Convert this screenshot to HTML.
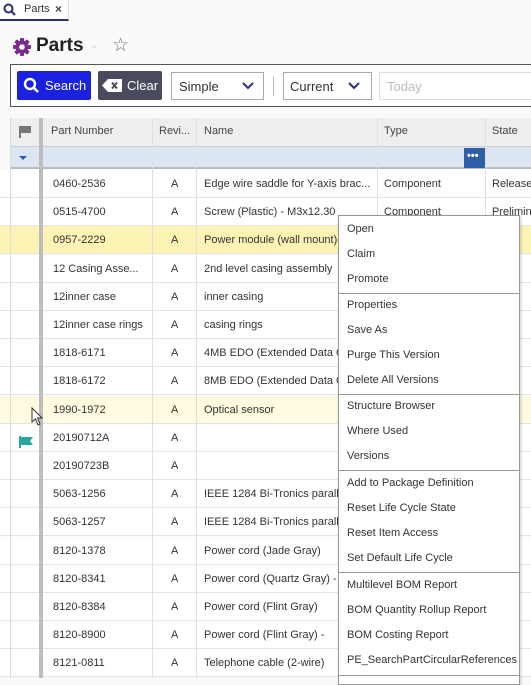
<!DOCTYPE html>
<html><head><style>
*{margin:0;padding:0;box-sizing:border-box}
body{width:531px;height:678px;overflow:hidden;background:#fafafa;font-family:"Liberation Sans",Arial,sans-serif;position:relative;color:#333}
.a{position:absolute}
.row{position:absolute;left:0;width:531px;height:28px;border-bottom:1px solid #e4e4e4;background:#fff;font-size:11px}
.row span{position:absolute;top:8px;white-space:nowrap;overflow:hidden}
.mi{position:absolute;left:8px;font-size:11px;color:#333}
.sep{position:absolute;left:0;right:0;height:1px;background:#999}
</style></head><body>
<!-- tab -->
<div class="a" style="left:0;top:0;width:69px;height:21px;background:#fff;border-bottom:2px solid #2b2f7a;border-right:1px solid #ddd"></div>
<svg class="a" style="left:3px;top:3px" width="13" height="13" viewBox="0 0 13 13"><circle cx="5.5" cy="5.5" r="4" fill="none" stroke="#2b2f7a" stroke-width="2"/><path d="M8.5 8.5L12 12" stroke="#2b2f7a" stroke-width="2.2"/></svg>
<div class="a" style="left:24px;top:3px;font-size:11px">Parts</div>
<div class="a" style="left:55px;top:2px;font-size:12px;font-weight:bold;color:#444">×</div>
<!-- title -->
<svg class="a" style="left:12px;top:37px" width="20" height="20" viewBox="0 0 20 20"><g fill="#7a2b8c"><circle cx="10" cy="10" r="6.5"/><rect x="8" y="1" width="4" height="18" rx="1"/><rect x="8" y="1" width="4" height="18" rx="1" transform="rotate(45 10 10)"/><rect x="8" y="1" width="4" height="18" rx="1" transform="rotate(90 10 10)"/><rect x="8" y="1" width="4" height="18" rx="1" transform="rotate(135 10 10)"/></g><circle cx="10" cy="10" r="2.8" fill="#fafafa"/></svg>
<div class="a" style="left:36px;top:35px;font-size:19px;font-weight:bold;color:#222">Parts</div>
<div class="a" style="left:90px;top:40px;font-size:10px;color:#ccc">⌄</div>
<div class="a" style="left:112px;top:34px;font-size:19px;color:#777">☆</div>
<!-- toolbar -->
<div class="a" style="left:10px;top:64px;width:530px;height:43px;border:1px solid #555;background:#fff"></div>
<div class="a" style="left:17px;top:71px;width:74px;height:29px;background:#1a22e0;border-radius:2px"></div>
<svg class="a" style="left:23px;top:77px" width="17" height="17" viewBox="0 0 17 17"><circle cx="7" cy="7" r="5" fill="none" stroke="#fff" stroke-width="2.4"/><path d="M10.5 10.5L15 15" stroke="#fff" stroke-width="2.6"/></svg>
<div class="a" style="left:45px;top:78px;color:#fff;font-size:13px">Search</div>
<div class="a" style="left:98px;top:71px;width:64px;height:29px;background:#4a4a5e;border-radius:2px"></div>
<svg class="a" style="left:102px;top:79px" width="20" height="13" viewBox="0 0 20 13"><path d="M6 0H20V13H6L0 6.5Z" fill="#fff"/><path d="M10 3.5L15 9.5M15 3.5L10 9.5" stroke="#4a4a5e" stroke-width="2"/></svg>
<div class="a" style="left:127px;top:78px;color:#fff;font-size:13px">Clear</div>
<div class="a" style="left:171px;top:72px;width:93px;height:28px;border:1px solid #aaa;background:#fff"></div>
<div class="a" style="left:179px;top:79px;font-size:13px">Simple</div>
<svg class="a" style="left:242px;top:82px" width="12" height="8"><path d="M1 1L6 6L11 1" fill="none" stroke="#2b2f7a" stroke-width="2"/></svg>
<div class="a" style="left:273px;top:76px;width:1px;height:20px;background:#bbb"></div>
<div class="a" style="left:283px;top:72px;width:89px;height:28px;border:1px solid #aaa;background:#fff"></div>
<div class="a" style="left:290px;top:79px;font-size:13px">Current</div>
<svg class="a" style="left:348px;top:82px" width="12" height="8"><path d="M1 1L6 6L11 1" fill="none" stroke="#2b2f7a" stroke-width="2"/></svg>
<div class="a" style="left:379px;top:72px;width:160px;height:28px;border:1px solid #ddd;background:#fff"></div>
<div class="a" style="left:387px;top:79px;font-size:13px;color:#bbb">Today</div>
<!-- header -->
<div class="a" style="left:10px;top:118px;width:521px;height:29px;background:#eee;border-bottom:1px solid #ccc"></div>
<svg class="a" style="left:18px;top:125px" width="14" height="13"><path d="M2 1V13" stroke="#777" stroke-width="2"/><path d="M3 1H13V8H3Z" fill="#777"/></svg>
<div class="a" style="left:10px;top:147px;width:521px;height:22px;background:#dce6f3;border-bottom:2px solid #bbb"></div>
<svg class="a" style="left:19px;top:156px" width="8" height="5"><path d="M0 0H8L4 4Z" fill="#2a5ca8"/></svg>
<div class="a" style="left:464px;top:148px;width:21px;height:20px;background:#2e5ea8"></div>
<div class="a" style="left:467px;top:150px;color:#fff;font-size:11px;font-weight:bold">•••</div>
<div class="a" style="left:51px;top:125px;font-size:11px;color:#444">Part Number</div>
<div class="a" style="left:159px;top:125px;font-size:11px;color:#444">Revi...</div>
<div class="a" style="left:204px;top:125px;font-size:11px;color:#444">Name</div>
<div class="a" style="left:384px;top:125px;font-size:11px;color:#444">Type</div>
<div class="a" style="left:492px;top:125px;font-size:11px;color:#444">State</div>
<div id="rows"></div>
<script>
var d=[["0460-2536","Edge wire saddle for Y-axis brac...","Component","Release"],["0515-4700","Screw (Plastic) - M3x12.30","Component","Prelimin"],["0957-2229","Power module (wall mount)-","","min"],["12 Casing Asse...","2nd level casing assembly","","min"],["12inner case","inner casing","","min"],["12inner case rings","casing rings","","min"],["1818-6171","4MB EDO (Extended Data O","","min"],["1818-6172","8MB EDO (Extended Data O","","min"],["1990-1972","Optical sensor","","min"],["20190712A","","","min"],["20190723B","","","min"],["5063-1256","IEEE 1284 Bi-Tronics parall","","min"],["5063-1257","IEEE 1284 Bi-Tronics parall","","min"],["8120-1378","Power cord (Jade Gray)","","se"],["8120-8341","Power cord (Quartz Gray) -","","min"],["8120-8384","Power cord (Flint Gray)","","min"],["8120-8900","Power cord (Flint Gray) -","","min"],["8121-0811","Telephone cable (2-wire)","","min"]];
var h="";d.forEach(function(r,i){var t=170+i*28.2;var bg=i==2?"#fdf3b4":(i==8?"#fffbe0":"#fff");
h+='<div class="row" style="top:'+t+'px;background:'+bg+'"><span style="left:53px">'+r[0]+'</span><span style="left:171px">A</span><span style="left:204px;width:170px">'+r[1]+'</span><span style="left:384px">'+r[2]+'</span><span style="left:492px">'+r[3]+'</span></div>';});
document.getElementById("rows").innerHTML=h;
</script>
<!-- column lines -->
<div class="a" style="left:10px;top:118px;width:1px;height:560px;background:#ddd"></div>
<div class="a" style="left:39px;top:118px;width:4px;height:560px;background:#bdbdbd"></div>
<div class="a" style="left:152px;top:118px;width:1px;height:560px;background:#e0e0e0"></div>
<div class="a" style="left:196px;top:118px;width:1px;height:560px;background:#e0e0e0"></div>
<div class="a" style="left:377px;top:118px;width:1px;height:560px;background:#e0e0e0"></div>
<div class="a" style="left:485px;top:118px;width:1px;height:560px;background:#e0e0e0"></div>
<svg class="a" style="left:19px;top:436px" width="15" height="12"><path d="M1 0V12" stroke="#2aa79b" stroke-width="2"/><path d="M2 1H14L11 5L14 9H2Z" fill="#2aa79b"/></svg>
<svg class="a" style="left:31px;top:407px" width="12" height="19"><path d="M1 1V15L4.5 12L7 18L9 17L6.5 11H11Z" fill="#fff" stroke="#333" stroke-width="1"/></svg>
<!-- menu -->
<div class="a" style="left:338px;top:215px;width:182px;height:470px;background:#fff;border:1px solid #999;box-shadow:1px 1px 3px rgba(0,0,0,.2)">
<div class="mi" style="top:7px">Open</div><div class="mi" style="top:32px">Claim</div><div class="mi" style="top:57px">Promote</div>
<div class="sep" style="top:77px"></div>
<div class="mi" style="top:83px">Properties</div><div class="mi" style="top:108px">Save As</div><div class="mi" style="top:133px">Purge This Version</div><div class="mi" style="top:158px">Delete All Versions</div>
<div class="sep" style="top:178px"></div>
<div class="mi" style="top:184px">Structure Browser</div><div class="mi" style="top:209px">Where Used</div><div class="mi" style="top:234px">Versions</div>
<div class="sep" style="top:254px"></div>
<div class="mi" style="top:261px">Add to Package Definition</div><div class="mi" style="top:286px">Reset Life Cycle State</div><div class="mi" style="top:311px">Reset Item Access</div><div class="mi" style="top:336px">Set Default Life Cycle</div>
<div class="sep" style="top:356px"></div>
<div class="mi" style="top:363px">Multilevel BOM Report</div><div class="mi" style="top:388px">BOM Quantity Rollup Report</div><div class="mi" style="top:413px">BOM Costing Report</div><div class="mi" style="top:438px">PE_SearchPartCircularReferences</div>
<div class="sep" style="top:459px"></div>
</div>
</body></html>
